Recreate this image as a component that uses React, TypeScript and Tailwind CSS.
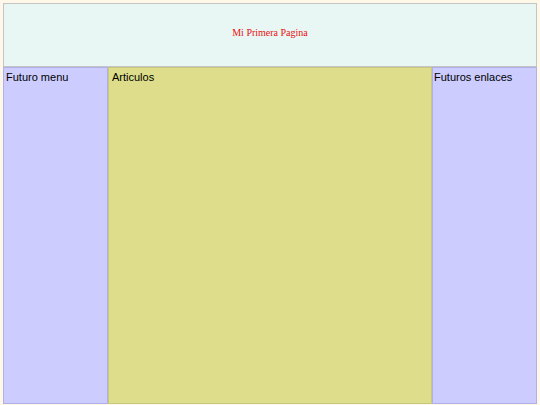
export default function App() {
  return (
    <div className="min-h-screen bg-[#fff8e8] p-[3px]" style={{ fontFamily: '"Liberation Sans", Arial, sans-serif' }}>
      {/* Cabecera */}
      <header className="flex h-[64px] items-center justify-center border border-[#c4c4c4] bg-[#e8f7f4] pb-[6px]">
        <h1 className="text-[10px] text-[#e81010]" style={{ fontFamily: '"Liberation Serif", "Times New Roman", serif' }}>
          Mi Primera Pagina
        </h1>
      </header>

      <div className="flex h-[337px]">
        <nav className="w-[105px] border border-[#b0b0e8] bg-[#ccccff] px-[2px] pt-[2px] text-[11px] leading-[14px] text-black">
          Futuro menu
        </nav>
        <main className="flex-1 border border-[#c8c880] bg-[#dddd8b] px-[3px] pt-[2px] text-[11px] leading-[14px] text-black">
          Articulos
        </main>
        <aside className="w-[105px] border border-[#b0b0e8] bg-[#ccccff] px-[1px] pt-[2px] text-[11px] leading-[14px] text-black">
          Futuros enlaces
        </aside>
      </div>
    </div>
  );
}
